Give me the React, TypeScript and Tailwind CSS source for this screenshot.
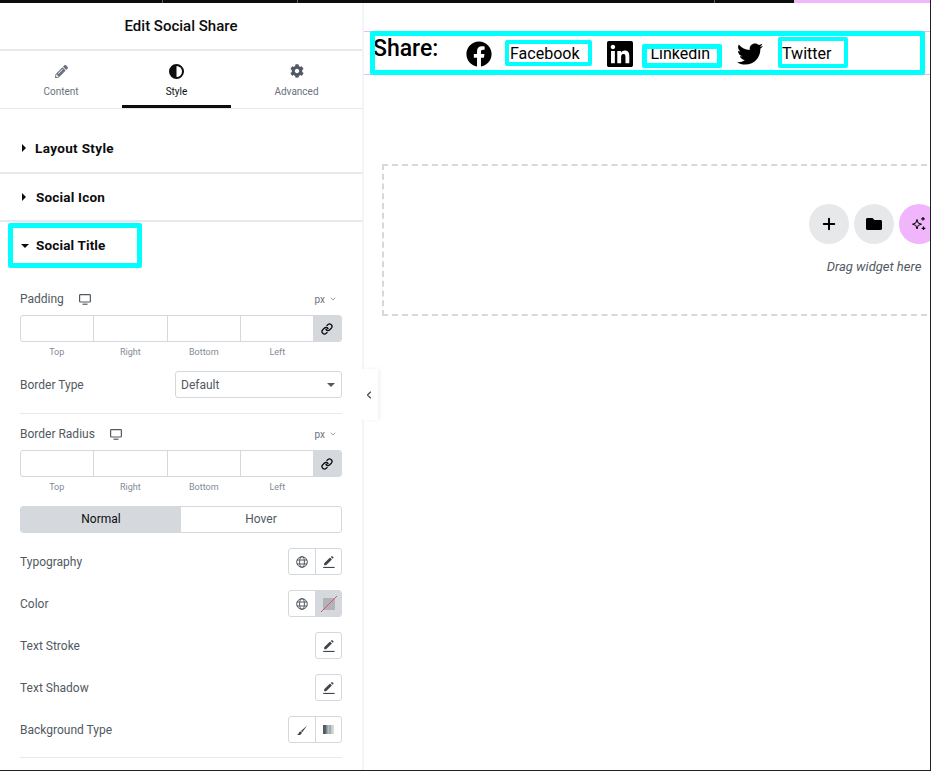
import React from "react";
import { FaFacebook, FaLinkedin, FaTwitter, FaCog, FaFolder, FaPencilAlt } from "react-icons/fa";
import { Plus, ChevronDown, ChevronLeft, Link } from "lucide-react";

const Pen = () => (
  <svg viewBox="0 0 12 12" className="w-3 h-3 text-[#3f444b]" fill="currentColor">
    <path d="M1.2 9.2V7.3L7 1.6l1.9 1.9-5.8 5.7z" />
    <path d="M7.8.9 8.5.2a.6.6 0 0 1 .8 0l1.1 1.1a.6.6 0 0 1 0 .8l-.7.7z" />
    <rect x="0.2" y="10.9" width="11.4" height="1.1" />
  </svg>
);

const Brush = () => (
  <svg viewBox="0 0 12 12" className="w-3 h-3 text-[#3f444b]" fill="currentColor">
    <path d="M11.2 1.6 6.2 8.2 4.9 7z" />
    <path d="M1 10.4c1.5-.1 1.6-1 2-1.9.4-.8 1-1.2 1.6-1.1l1.2 1.1c0 1.2-1 2.4-2.4 2.4-.9 0-1.8-.1-2.4-.5z" />
  </svg>
);

const Globe = () => (
  <svg viewBox="0 0 12 12" className="w-3 h-3 text-[#515962]" fill="none" stroke="currentColor" strokeWidth="1">
    <circle cx="6" cy="6" r="5.3" />
    <ellipse cx="6" cy="6" rx="2.4" ry="5.3" />
    <path d="M.9 4h10.2M.9 8h10.2" />
  </svg>
);

const Desktop = () => (
  <svg viewBox="0 0 12 11" className="w-3 h-[11px] text-[#515962]" fill="none">
    <rect x="0.6" y="0.6" width="10.8" height="7.4" rx="0.8" stroke="currentColor" strokeWidth="1.2" />
    <rect x="3.5" y="9.6" width="5" height="1.2" fill="currentColor" />
  </svg>
);

const Sparkle = () => (
  <svg viewBox="0 0 16 16" className="w-4 h-4 text-black" fill="none" stroke="currentColor" strokeWidth="1">
    <path d="M6 3.5 7.2 7 10.5 8.2 7.2 9.4 6 13 4.8 9.4 1.5 8.2 4.8 7z" />
    <path d="M12 1v3.6M10.2 2.8h3.6M12.5 10.5v3.6M10.7 12.3h3.6" strokeWidth="1.2" />
  </svg>
);

const Tab = ({ label, active, icon }: { label: string; active?: boolean; icon: React.ReactNode }) => (
  <div className={`w-full h-full flex flex-col items-center pt-[12px] border-b-[3px] ${active ? "border-[#0c0d0e] text-[#0c0d0e]" : "border-transparent text-[#69727d]"}`}>
    <div className="h-4 flex items-center justify-center">{icon}</div>
    <div className="text-[10px] leading-3 mt-[7px]">{label}</div>
  </div>
);

const Section = ({ label, ml, tracking, lift }: { label: string; ml: string; tracking: string; lift?: string }) => (
  <div className={`h-[48px] flex items-center pl-[22px] border-b-2 border-[#e6e8ea] text-[#0c0d0e] ${lift ?? ""}`}>
    <span className="w-0 h-0 border-y-[4px] border-y-transparent border-l-[4px] border-l-[#0c0d0e]" />
    <span className={`text-[13.5px] font-bold ${tracking} ${ml}`}>{label}</span>
  </div>
);

const Dimensions = () => (
  <>
    <div className="mt-[9px] h-[27px] flex border border-[#d5d8dc] rounded-[3px] overflow-hidden">
      <div className="w-[73px] border-r border-[#d5d8dc]" />
      <div className="w-[74px] border-r border-[#d5d8dc]" />
      <div className="w-[73px] border-r border-[#d5d8dc]" />
      <div className="flex-1" />
      <div className="w-[28px] bg-[#d5d8dc] flex items-center justify-center text-[#0c0d0e]"><Link size={12} strokeWidth={2.6} /></div>
    </div>
    <div className="flex text-[9px] leading-3 text-[#818a96] mt-[4px] mb-[-1px] pr-[28px]">
      {["Top", "Right", "Bottom", "Left"].map((t) => (
        <div key={t} className="flex-1 text-center">{t}</div>
      ))}
    </div>
  </>
);

const LabelUnit = ({ label }: { label: string }) => (
  <div className="flex items-center h-[14px] text-[12px] text-[#515962]">
    <span>{label}</span>
    <span className="ml-[15px]"><Desktop /></span>
    <span className="ml-auto mr-[5px] flex items-center text-[10px] text-[#69727d]">px<ChevronDown size={8} strokeWidth={2} className="ml-[4px]" /></span>
  </div>
);

const IconBtn = ({ children, shaded, last }: { children?: React.ReactNode; shaded?: boolean; last?: boolean }) => (
  <div className={`h-full flex items-center justify-center ${last ? "w-[25px]" : "w-[27px] border-r border-[#d5d8dc]"} ${shaded ? "bg-[#d5d8dc]" : ""}`}>{children}</div>
);

const Row = ({ label, children }: { label: string; children: React.ReactNode }) => (
  <div className="flex items-center justify-between h-[27px] mb-[15px] text-[12px] text-[#515962]">
    <span>{label}</span>
    <div className="h-full flex border border-[#d5d8dc] rounded-[3px] overflow-hidden">{children}</div>
  </div>
);

const Gradient = () => (
  <div className="w-[11px] h-[9px] bg-[linear-gradient(90deg,#515962_0%,#515962_20%,#8d949c_35%,#b6bcc0_50%,#9aa3a8_65%,#c9d6cc_80%,#d6e0d8_100%)]" />
);

export default function App() {
  return (
    <div className="relative w-[931px] h-[771px] overflow-hidden bg-white border-r border-b border-[#1f2124] flex flex-col" style={{ fontFamily: "Roboto, sans-serif" }}>
      <div className="h-[3px] flex shrink-0">
        <div className="w-[163px] bg-[#0c0d0e] border-r border-[#5a5d61]" />
        <div className="w-[135px] bg-[#0c0d0e] border-r border-[#5a5d61]" />
        <div className="w-[417px] bg-[#0c0d0e] border-r border-[#5a5d61]" />
        <div className="flex-1 bg-[#0c0d0e]" />
        <div className="w-[136px] bg-[#f0b5fb]" />
      </div>
      <div className="flex-1 flex min-h-0">
        <aside className="w-[362px] shrink-0 flex flex-col">
          <div className="h-[48px] flex items-center justify-center text-[15px] font-medium text-[#0c0d0e] border-b-2 border-[#e6e8ea]">Edit Social Share</div>
          <div className="h-[58px] flex border-b border-[#e6e8ea]">
            <div className="w-[122px] h-full"><Tab label="Content" icon={<FaPencilAlt size={13} className="text-[#69727d]" />} /></div>
            <div className="w-[109px] h-full"><Tab label="Style" active icon={
              <svg viewBox="0 0 15 15" className="w-[15px] h-[15px]"><circle cx="7.5" cy="7.5" r="6.5" fill="none" stroke="#0c0d0e" strokeWidth="2" /><path d="M7.5 1a6.5 6.5 0 0 0 0 13z" fill="#0c0d0e" /></svg>
            } /></div>
            <div className="flex-1 h-full"><Tab label="Advanced" icon={<FaCog size={14} className="text-[#515962]" />} /></div>
          </div>
          <div className="pt-[17px]">
            <Section label="Layout Style" ml="ml-[9px]" tracking="tracking-[0.35px]" lift="pb-[2px]" />
            <Section label="Social Icon" ml="ml-[10px]" tracking="tracking-[0.2px]" />
            <div className="h-[47px] flex items-center pl-[21px] text-[#0c0d0e]">
              <span className="w-0 h-0 border-x-[4px] border-x-transparent border-t-[4px] border-t-[#0c0d0e]" />
              <span className="text-[13.5px] font-bold tracking-[0.15px] ml-[7px]">Social Title</span>
            </div>
          </div>
          <div className="px-5 pt-[23px]">
            <LabelUnit label="Padding" />
            <Dimensions />
            <div className="mt-[14px] flex items-center justify-between text-[12px] text-[#515962]">
              <span>Border Type</span>
              <div className="w-[167px] h-[27px] border border-[#d5d8dc] rounded-[3px] flex items-center px-[5px]">
                Default
                <span className="ml-auto mr-[1px] w-0 h-0 border-x-[4px] border-x-transparent border-t-[4px] border-t-[#515962]" />
              </div>
            </div>
            <div className="h-px bg-[#e6e8ea] mt-[15px] mb-[13px]" />
            <LabelUnit label="Border Radius" />
            <Dimensions />
            <div className="mt-[14px] h-[27px] flex border border-[#d5d8dc] rounded-[3px] overflow-hidden text-[12px]">
              <div className="w-[160px] bg-[#d5d8dc] text-[#0c0d0e] flex items-center justify-center pb-[2px]">Normal</div>
              <div className="flex-1 text-[#515962] flex items-center justify-center pb-[2px]">Hover</div>
            </div>
            <div className="mt-[15px]">
              <Row label="Typography"><IconBtn><Globe /></IconBtn><IconBtn last><Pen /></IconBtn></Row>
              <Row label="Color">
                <IconBtn><Globe /></IconBtn>
                <IconBtn last shaded>
                  <svg viewBox="0 0 18 18" className="w-[18px] h-[18px]"><rect x="3" y="3" width="12" height="12" rx="1" fill="#b0b3b8" /><path d="M1 17 17 1" stroke="#e0505e" strokeWidth="1" /></svg>
                </IconBtn>
              </Row>
              <Row label="Text Stroke"><IconBtn last><Pen /></IconBtn></Row>
              <Row label="Text Shadow"><IconBtn last><Pen /></IconBtn></Row>
              <Row label="Background Type">
                <IconBtn><Brush /></IconBtn>
                <IconBtn last><Gradient /></IconBtn>
              </Row>
            </div>
            <div className="h-px bg-[#e6e8ea] -mt-[1px]" />
          </div>
        </aside>
        <div className="w-[2px] shrink-0 bg-[#f3f4f5]" />
        <main className="flex-1 min-w-0" />
      </div>

      {/* Share row */}
      <div className="absolute left-[364px] top-[31px] right-0 h-[44px] flex items-center text-black border-y border-[#f0b5fb]">
        <span className="ml-[9px] -mt-[8px] w-[66px] text-[23px] leading-[28px] font-medium">Share:</span>
        <FaFacebook size={26} className="ml-[27px] mt-[2px]" />
        <span className="ml-[18px] mt-[1px] text-[16px] leading-5">Facebook</span>
        <FaLinkedin size={26} viewBox="0 32 448 448" className="ml-[28px] mt-[2px]" />
        <span className="ml-[17px] mt-[1px] text-[16px] leading-5">Linkedin</span>
        <FaTwitter size={26} className="ml-[27px] mt-[2px]" />
        <span className="ml-[19px] mt-[1px] text-[16px] leading-5">Twitter</span>
      </div>

      {/* Empty drop zone */}
      <div className="absolute left-[382px] top-[164px] w-[984px] h-[152px] border-2 border-dashed border-[#d5d8dc] flex flex-col items-center justify-center">
        <div className="flex gap-[5px]">
          <div className="w-10 h-10 rounded-full bg-[#e6e8ea] flex items-center justify-center"><Plus size={18} strokeWidth={2.6} className="text-black" /></div>
          <div className="w-10 h-10 rounded-full bg-[#e6e8ea] flex items-center justify-center"><FaFolder size={16} className="text-black" /></div>
          <div className="w-10 h-10 rounded-full bg-[#f0b5fb] flex items-center justify-center"><Sparkle /></div>
        </div>
        <div className="mt-[13px] text-[13px] italic text-[#515962]">Drag widget here</div>
      </div>

      {/* Panel collapse toggle */}
      <div className="absolute left-[362px] top-[369px] w-[16px] h-[51px] bg-white shadow-[2px_0_4px_rgba(0,0,0,0.06)] flex items-center justify-center pr-[2px] text-[#3f444b]">
        <ChevronLeft size={12} strokeWidth={2.2} />
      </div>

      {/* Highlight annotations over the content */}
      <div className="absolute left-[8px] top-[223px] w-[134px] h-[45px] border-[5px] border-[#00ffff] rounded-[2px]" />
      <div className="absolute left-[370px] top-[31px] w-[555px] h-[44px] border-[5px] border-[#00ffff] rounded-[2px]" />
      <div className="absolute left-[505px] top-[40px] w-[87px] h-[26px] border-[4px] border-[#00ffff] rounded-[2px]" />
      <div className="absolute left-[642px] top-[44px] w-[80px] h-[24px] border-[5px] border-[#00ffff] rounded-[2px]" />
      <div className="absolute left-[778px] top-[37px] w-[70px] h-[31px] border-[4px] border-[#00ffff] rounded-[2px]" />
    </div>
  );
}
